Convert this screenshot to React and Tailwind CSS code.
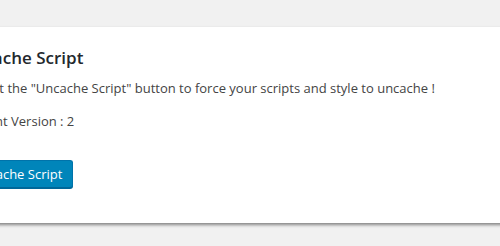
export default function App() {
  return (
    <div className="min-h-[246px] bg-[#f1f1f1] pt-[27px] overflow-hidden" style={{ fontFamily: '"Open Sans", sans-serif' }}>
      <div className="-ml-[51px] w-[570px] bg-white pl-[12px] pt-[20px] pb-[35px] shadow-[0_2px_3px_rgba(0,0,0,0.45)]">
        <h2 className="text-[17px] leading-[22px] font-semibold text-[#23282d]">Uncache Script</h2>
        <p className="mt-[10px] text-[13px] leading-[19.5px] text-[#444]">
          Submit the "Uncache Script" button to force your scripts and style to uncache !
        </p>
        <p className="mt-[13px] text-[13px] leading-[19.5px] text-[#444]">Current Version : 2</p>
        <button className="mt-[29px] h-[28px] rounded-[3px] border border-[#0073aa] border-b-[#006799] bg-[#0085ba] px-[10px] pb-px text-[13px] leading-[26px] text-white shadow-[0_1px_0_#006799]">
          Uncache Script
        </button>
      </div>
    </div>
  );
}
